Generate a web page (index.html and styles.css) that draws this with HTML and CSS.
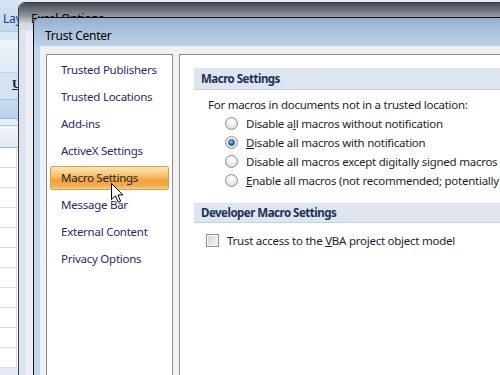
FILE: index.html
```html
<!doctype html>
<html lang="en">
  <head>
    <meta charset="UTF-8" />
    <meta name="viewport" content="width=device-width, initial-scale=1.0" />
    <title>Trust Center</title>
    <link rel="stylesheet" href="styles.css">
  </head>
  <body>
    <div class="desktop">
      <div class="excel">
        <div class="tabs">Lay</div>
        <div class="ribbon-top"></div>
        <div class="ribbon-mid"></div>
        <div class="ribbon-font"><span class="u-btn">U</span></div>
        <div class="ribbon-foot"></div>
        <div class="formula"></div>
        <div class="col-head"></div>
        <div class="grid">
          <div class="row"></div><div class="row"></div><div class="row"></div>
          <div class="row"></div><div class="row"></div><div class="row"></div>
          <div class="row"></div><div class="row"></div><div class="row"></div>
          <div class="row"></div><div class="row"></div>
        </div>
      </div>

      <div class="window options-window">
        <div class="titlebar options-title">Excel Options</div>
        <div class="client options-client"></div>
      </div>

      <div class="window trust-window">
        <div class="titlebar trust-title">Trust Center</div>
        <div class="client trust-client">
          <ul class="nav">
            <li>Trusted Publishers</li>
            <li>Trusted Locations</li>
            <li>Add-ins</li>
            <li>ActiveX Settings</li>
            <li class="active">Macro Settings</li>
            <li>Message Bar</li>
            <li>External Content</li>
            <li>Privacy Options</li>
          </ul>

          <div class="panel">
            <div class="section-head">Macro Settings</div>
            <div class="section-body">
              <p class="intro">For macros in documents not in a trusted location:</p>
              <div class="option"><span class="radio"></span><span>Disable a<u>l</u>l macros without notification</span></div>
              <div class="option"><span class="radio checked"></span><span><u>D</u>isable all macros with notification</span></div>
              <div class="option"><span class="radio"></span><span>Disable all macros except di<u>g</u>itally signed macros</span></div>
              <div class="option"><span class="radio"></span><span><u>E</u>nable all macros (not recommended; potentially dangerous code can run)</span></div>
            </div>
            <div class="section-head dev-head">Developer Macro Settings</div>
            <div class="check-row"><span class="checkbox"></span><span>Trust access to the <u>V</u>BA project object model</span></div>
          </div>
        </div>
      </div>

      <svg class="cursor" width="13" height="21" viewBox="0 0 13 21">
        <path d="M0.5 0.5 L0.5 16.5 L4.5 12.8 L7.2 19.2 L9.6 18.2 L7 11.9 L12 11.9 Z" fill="#fff" stroke="#000" stroke-width="1" stroke-linejoin="round"/>
      </svg>
    </div>
  </body>
</html>
```

FILE: styles.css
```css
html, body {
  margin: 0;
  padding: 0;
}
body {
  font-family: "Noto Sans", "Open Sans", sans-serif;
  font-size: 11.5px;
  letter-spacing: -0.25px;
  color: #1e1e1e;
}
.desktop {
  position: relative;
  width: 500px;
  height: 375px;
  overflow: hidden;
  background: #e3ebf6;
}

/* excel behind */
.excel {
  width: 18px;
  display: flex;
  flex-direction: column;
}
.tabs {
  height: 31px;
  box-sizing: border-box;
  padding: 11px 0 0 3px;
  background: linear-gradient(#d6e4f5, #c2d6ee);
  color: #15428b;
  font-size: 12px;
  line-height: 16px;
  white-space: nowrap;
}
.ribbon-top {
  height: 8px;
  background: #dbe7f6;
  border-top: 1px solid #b6cbe6;
}
.ribbon-mid {
  height: 32px;
  background: linear-gradient(#eef4fb, #dfe9f6);
}
.ribbon-font {
  height: 26px;
  background: #d4e2f3;
  border-top: 1px solid #c0d1e8;
  position: relative;
}
.u-btn {
  position: absolute;
  left: 12px;
  top: 3px;
  font-family: "Liberation Serif", serif;
  font-weight: bold;
  font-size: 13px;
  text-decoration: underline;
  color: #222;
}
.ribbon-foot {
  height: 18px;
  background: linear-gradient(#c9dbf1, #b9cfea);
  border-top: 1px solid #aac2e0;
}
.formula {
  height: 6px;
  background: #e6eef9;
  border-top: 1px solid #9fb8d8;
}
.col-head {
  height: 21px;
  background: linear-gradient(#f3f6fb, #e0e8f3);
  border-top: 1px solid #b3c5de;
  border-bottom: 1px solid #9eb6ce;
}
.grid {
  background: #fff;
  flex: 1;
}
.row {
  height: 19px;
  border-bottom: 1px solid #d6dce6;
  border-right: 1px solid #d6dce6;
  width: 16px;
}

/* windows */
.window {
  position: absolute;
  border: 1px solid #2a2a2a;
  border-radius: 7px 7px 0 0;
  overflow: hidden;
}
.titlebar {
  height: 28px;
  box-sizing: border-box;
  line-height: 16px;
  font-size: 12px;
  color: #000;
  white-space: nowrap;
}
.options-window {
  left: 18px;
  top: 2px;
  width: 600px;
  height: 400px;
  background: #dbe5f2;
  border-color: #3c3c3c;
}
.options-title {
  padding: 9px 0 0 12px;
  line-height: 14px;
  background: linear-gradient(#464a51 0%, #8e949b 45%, #d3dae3 75%, #dce3ea 100%);
}
.options-client {
  margin-left: 7px;
  height: 100%;
  background: #eef0f3;
}
.trust-window {
  left: 33px;
  top: 17px;
  width: 600px;
  height: 400px;
  background: #c2d5ea;
  border-color: #111;
}
.trust-title {
  padding: 10px 0 0 11px;
  background: linear-gradient(#95afcb 0%, #aac2dc 45%, #bcd1e8 100%);
}
.trust-client {
  margin-left: 6px;
  height: 100%;
  background: #f0f0f0;
  padding: 8px 0 0 6px;
  display: flex;
  gap: 6px;
  align-items: flex-start;
}

/* navigation */
.nav {
  list-style: none;
  margin: 0;
  padding: 3px;
  width: 127px;
  height: 360px;
  flex: none;
  box-sizing: border-box;
  background: #fff;
  border: 1px solid #8d8e8f;
}
.nav li {
  height: 24px;
  line-height: 22px;
  box-sizing: border-box;
  margin-bottom: 3px;
  padding-left: 10px;
  border: 1px solid transparent;
  color: #1f2b66;
  white-space: nowrap;
}
.nav li.active {
  border-color: #d3a14f;
  border-radius: 2px;
  background: linear-gradient(#fde6ad 0%, #f9c77a 35%, #f3a13c 60%, #f4aa4e 85%, #f9cd8a 100%);
  color: #222;
}

/* right panel */
.panel {
  flex: 1;
  height: 360px;
  background: #fff;
  border: 1px solid #8d8e8f;
  padding-top: 13px;
  padding-left: 14px;
}
.section-head {
  height: 21px;
  line-height: 22px;
  padding-left: 7px;
  background: #dde6ef;
  border-bottom: 1px solid #c5d1dd;
  color: #1b3157;
  font-weight: bold;
  letter-spacing: -0.5px;
  white-space: nowrap;
}
.section-body {
  padding: 5px 0 0 14px;
}
.intro {
  margin: 0;
  height: 19px;
  line-height: 19px;
  white-space: nowrap;
}
.option {
  display: flex;
  align-items: center;
  height: 19px;
  padding-left: 17px;
  white-space: nowrap;
}
.option:last-child {
  margin-bottom: 13px;
}
.radio {
  width: 11px;
  height: 11px;
  border-radius: 50%;
  border: 1px solid #8e9091;
  background: radial-gradient(circle at 50% 35%, #ffffff 0%, #eeeeee 45%, #cfcfcf 100%);
  margin-right: 8px;
  flex: none;
  display: flex;
  align-items: center;
  justify-content: center;
}
.radio.checked::after {
  content: "";
  width: 5px;
  height: 5px;
  border-radius: 50%;
  background: radial-gradient(circle at 40% 35%, #8fd0ff 0%, #2a77c4 55%, #0d3f7c 100%);
  border: 1px solid #1e4f86;
}
.dev-head {
  height: 19px;
  line-height: 20px;
}
.check-row {
  display: flex;
  align-items: center;
  height: 19px;
  margin-top: 8px;
  padding-left: 12px;
  white-space: nowrap;
}
.checkbox {
  width: 11px;
  height: 11px;
  border: 1px solid #8e9091;
  background: linear-gradient(135deg, #d4d4d4, #f6f6f6);
  box-shadow: inset 0 0 0 1px #f4f4f4;
  margin-right: 8px;
  flex: none;
}

.cursor {
  position: absolute;
  left: 111px;
  top: 183px;
}
```
